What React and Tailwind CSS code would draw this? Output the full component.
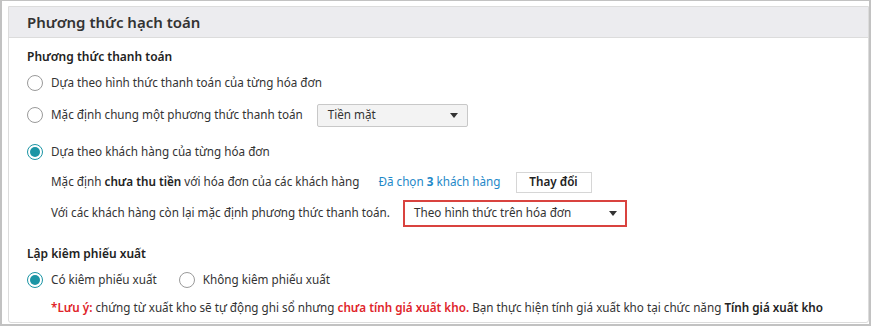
import React, { useState } from 'react';

const Radio = ({ checked, onClick }) => (
  <span
    onClick={onClick}
    className={`flex items-center justify-center w-[16px] h-[16px] rounded-full border bg-white shrink-0 cursor-pointer ${checked ? 'border-[#1b95a5]' : 'border-[#9a9a9a]'}`}
  >
    {checked && <span className="w-[10px] h-[10px] rounded-full bg-[#1b95a5]" />}
  </span>
);

const Caret = () => (
  <svg width="8" height="5" viewBox="0 0 8 5" className="shrink-0">
    <path d="M0 0 L8 0 L4 5 Z" fill="#333" />
  </svg>
);

const App = () => {
  const [payMode, setPayMode] = useState('customer');
  const [withSlip, setWithSlip] = useState(true);

  return (
    <div
      className="w-[871px] h-[326px] bg-white border-t border-l-2 border-r-2 border-b-2 border-[#c2c2c2] pl-[6px] pt-[5px] pb-[1px] text-[11.7px] text-[#333]"
      style={{ fontFamily: '"Noto Sans", "Open Sans", sans-serif' }}
    >
      <div className="h-full border border-[#dcdcdc] rounded-b-[3px] flex flex-col">
        {/* Header */}
        <div className="h-[31px] bg-[#ececef] border-b border-[#dcdcdc] flex items-center pl-[18px]">
          <span className="text-[15px] font-semibold text-[#333]">Phương thức hạch toán</span>
        </div>

        <div className="pl-[18px] pt-[9px]">
          {/* Payment method */}
          <div className="h-[20px] flex items-center font-semibold text-[12px] text-[#222]">Phương thức thanh toán</div>

          <div className="mt-[4px] h-[24px] flex items-center gap-[8px]">
            <Radio checked={payMode === 'invoice'} onClick={() => setPayMode('invoice')} />
            <span>Dựa theo hình thức thanh toán của từng hóa đơn</span>
          </div>

          <div className="mt-[7px] h-[26px] flex items-center gap-[8px]">
            <Radio checked={payMode === 'default'} onClick={() => setPayMode('default')} />
            <span>Mặc định chung một phương thức thanh toán</span>
            <div className="ml-[6px] w-[151px] h-[23px] border border-[#c8c8c8] rounded-[2px] bg-[#f3f3f3] flex items-center justify-between pl-[10px] pr-[9px]">
              <span>Tiền mặt</span>
              <Caret />
            </div>
          </div>

          <div className="mt-[12px] h-[24px] flex items-center gap-[8px]">
            <Radio checked={payMode === 'customer'} onClick={() => setPayMode('customer')} />
            <span>Dựa theo khách hàng của từng hóa đơn</span>
          </div>

          <div className="mt-[6px] h-[24px] flex items-center pl-[24px]">
            <span>
              Mặc định <span className="font-semibold text-[#222]">chưa thu tiền</span> với hóa đơn của các khách hàng
            </span>
            <span className="ml-[19px] text-[#1e88c8]">
              Đã chọn <b>3</b> khách hàng
            </span>
            <button className="ml-[15px] w-[76px] h-[21px] border border-[#d6d6d6] bg-white font-semibold text-[#222] flex items-center justify-center">
              Thay đổi
            </button>
          </div>

          <div className="mt-[4px] h-[30px] flex items-center pl-[24px]">
            <span>Với các khách hàng còn lại mặc định phương thức thanh toán.</span>
            <div className="ml-[13px] w-[224px] h-[27px] border-2 border-[#d9433f] bg-white flex items-center justify-between pl-[9px] pr-[8px]">
              <span>Theo hình thức trên hóa đơn</span>
              <Caret />
            </div>
          </div>

          {/* Export slip */}
          <div className="mt-[16px] h-[20px] flex items-center font-semibold text-[12px] text-[#222]">Lập kiêm phiếu xuất</div>

          <div className="mt-[4px] h-[24px] flex items-center">
            <Radio checked={withSlip} onClick={() => setWithSlip(true)} />
            <span className="ml-[8px]">Có kiêm phiếu xuất</span>
            <span className="ml-[22px]">
              <Radio checked={!withSlip} onClick={() => setWithSlip(false)} />
            </span>
            <span className="ml-[8px]">Không kiêm phiếu xuất</span>
          </div>

          <div className="mt-[6px] h-[20px] flex items-center pl-[24px] whitespace-nowrap">
            <span className="text-[#e0242a] font-semibold">*Lưu ý:</span>
            <span>&nbsp;chứng từ xuất kho sẽ tự động ghi sổ nhưng&nbsp;</span>
            <span className="text-[#e0242a] font-semibold">chưa tính giá xuất kho.</span>
            <span>&nbsp;Bạn thực hiện tính giá xuất kho tại chức năng&nbsp;</span>
            <span className="font-semibold text-[#222]">Tính giá xuất kho</span>
          </div>
        </div>
      </div>
    </div>
  );
};

export default App;
